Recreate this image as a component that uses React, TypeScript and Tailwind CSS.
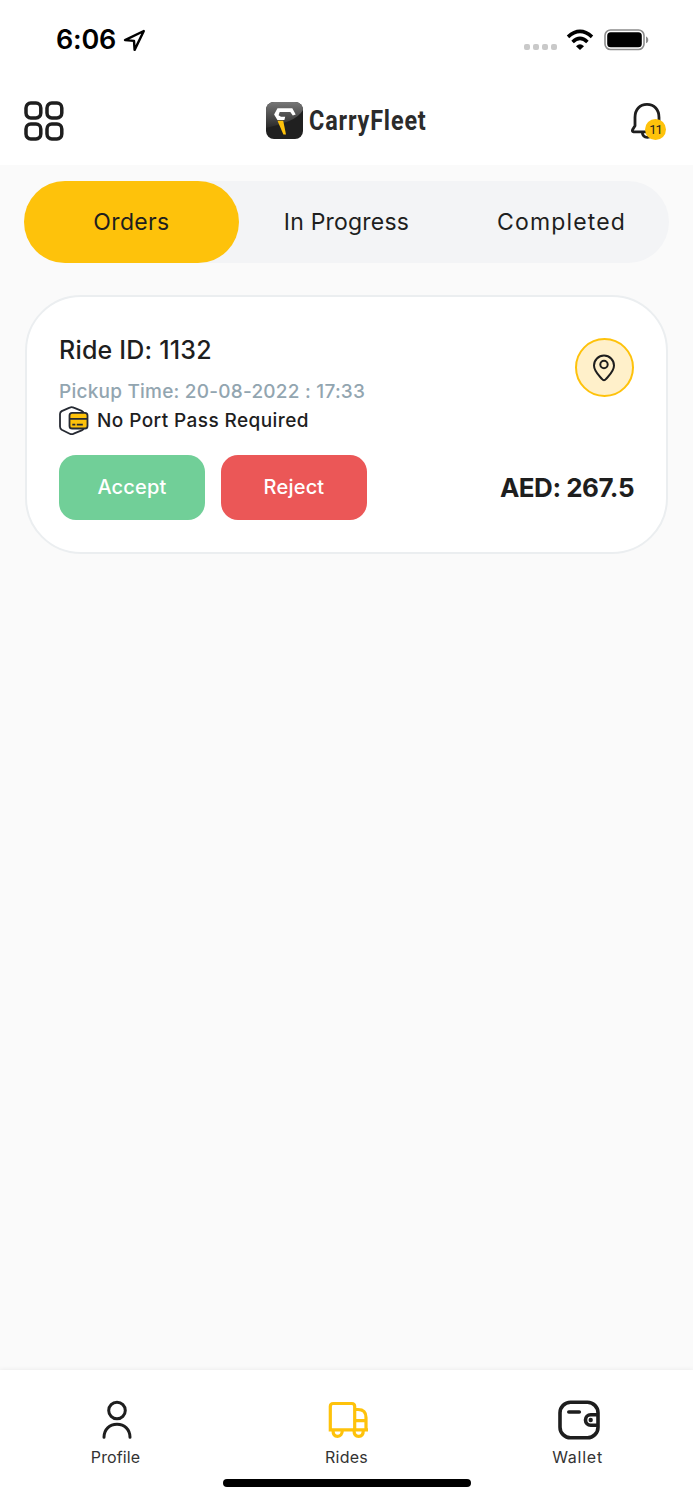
import { useState } from 'react';
import clsx from 'clsx';

const tabs = [
  { label: 'Orders', className: 'tracking-[0.35px]' },
  { label: 'In Progress', className: 'tracking-[0.2px]' },
  { label: 'Completed', className: 'tracking-[1.15px]' },
];

function StatusBar() {
  return (
    <div className="flex h-[78px] items-center justify-between pl-[56px] pr-[44px]">
      <div className="flex items-center gap-[7px] pt-[2px] text-black">
        <span className="text-[27px] font-semibold leading-8 tracking-[-0.2px]">6:06</span>
        <svg className="h-[23px] w-[23px]" viewBox="0 0 23 23" fill="none" stroke="currentColor" strokeWidth="2.4" strokeLinejoin="round">
          <path d="M20.8 2 2 11.1l9 .8.6 9z" />
        </svg>
      </div>
      <div className="flex items-center pt-[1px]">
        <div className="mt-[14px] flex gap-[3px]">
          {[0, 1, 2, 3].map((dot) => (
            <span key={dot} className="h-[6px] w-[6px] rounded-[2px] bg-[#c9c9c9]" />
          ))}
        </div>
        <svg className="ml-[9px] h-[22px] w-[28px]" viewBox="0 0 28 22" fill="none" stroke="#000">
          <path d="M2 7.800Q14-2.900 26 7.800" strokeWidth="3.600" />
          <path d="M6.600 13Q14 5.900 21.400 13" strokeWidth="3.600" />
          <path d="M10 17.200q4-3.700 8 0L14 21z" fill="#000" stroke="none" />
        </svg>
        <svg className="ml-[10px] h-[22px] w-[45px]" viewBox="0 0 45 22">
          <rect x="1" y="1" width="39" height="19.5" rx="5.5" fill="none" stroke="#8c8c8c" strokeWidth="1.6" />
          <rect x="3.2" y="3.2" width="34.6" height="15" rx="3.5" />
          <path d="M42 7.5c3 1.2 3 5.600 0 6.800z" fill="#8c8c8c" />
        </svg>
      </div>
    </div>
  );
}

function Logo() {
  return (
    <div className="flex items-center gap-[6px]">
      <svg className="h-[37px] w-[37px]" viewBox="0 0 37 37">
        <defs>
          <linearGradient id="gloss" x1="0" y1="0" x2="0" y2="1">
            <stop offset="0" stopColor="#777" />
            <stop offset="1" stopColor="#292929" />
          </linearGradient>
        </defs>
        <rect width="37" height="37" rx="8" fill="#202020" />
        <path d="M0 26V8a8 8 0 0 1 8-8h21a8 8 0 0 1 8 8Q33 15 23 19T0 26z" fill="url(#gloss)" />
        <path d="M11.500 6.200h14.800l3.400 6.300-2.900 1-2.500-3.500H13.700l-1.100 3.300 2.400 1.400h4.200l-.8 3.300h-7L8.100 12.600z" fill="#fff" />
        <path d="M11.500 18.800h5.700l2.800 13.700h-2.600z" fill="#fec20b" />
      </svg>
      <span className="w-[119px] origin-left scale-x-[0.865] whitespace-nowrap font-['Roboto',sans-serif] text-[27px] font-bold leading-9 tracking-[1px] text-[#2b2b2b]">
        CarryFleet
      </span>
    </div>
  );
}

function Header() {
  return (
    <header className="flex h-[87px] items-center justify-between pb-[2px] pl-6 pr-[27px]">
      <button aria-label="Menu">
        <svg className="h-10 w-10" viewBox="0 0 40 40" fill="none" stroke="#1e1e1e" strokeWidth="3.500">
          <rect x="2" y="2.100" width="14.800" height="14.800" rx="4.800" />
          <rect x="23" y="2.100" width="14.800" height="14.800" rx="4.800" />
          <rect x="2" y="23.100" width="14.800" height="14.800" rx="4.800" />
          <rect x="23" y="23.100" width="14.800" height="14.800" rx="4.800" />
        </svg>
      </button>
      <Logo />
      <button aria-label="Notifications" className="relative h-10 w-9">
        <svg className="h-10 w-9" viewBox="0 0 36 40" fill="none" stroke="#1e1e1e" strokeWidth="2.800" strokeLinejoin="round">
          <path d="M5 16.500C5 8.500 9.700 3.400 17 3.400S29 8.500 29 16.500v7l3 5.200v2.100H3.700q-2-.3-1-2.300L5 24.700z" />
          <path d="M12.200 31c.3 3.700 2.500 5.300 5.100 5.300s4.900-1.900 5.200-5.300" />
        </svg>
        <span className="absolute right-0 top-[18px] flex h-[21px] w-[21px] items-center justify-center rounded-full bg-[#fec20b] font-['Roboto',sans-serif] text-[13px] leading-none tracking-[-1px] text-[#1e1e1e]">
          11
        </span>
      </button>
    </header>
  );
}

function PortPassIcon() {
  return (
    <svg className="h-[30px] w-[30px]" viewBox="0 0 30 30" fill="none" stroke="#262a33" strokeWidth="1.800" strokeLinejoin="round">
      <path d="M10.700 1.600q2-1.100 4 0l8 3.200q2 .8 2 3v13.600q0 2-2 3l-8 3.300q-2 1-4 0l-8-3.900Q1 22.600 1 20.600V8.100q0-2 1.700-3z" />
      <rect x="10.500" y="6.900" width="18" height="15.600" rx="2.600" fill="#fec20b" />
      <path d="M10.500 12.900h18M13.300 18.600h3M17.800 18.600h6" />
    </svg>
  );
}

function RideCard() {
  return (
    <section className="mx-[25px] mt-8 flex h-[259px] justify-between rounded-[56px] border-2 border-[#ebeef0] bg-white px-8 pt-[35px] text-[#1e1e1e]">
      <div>
        <h2 className="text-[25px] font-medium leading-9 tracking-[0.2px]">Ride ID: 1132</h2>
        <p className="mt-[9px] text-[19px] font-medium leading-[30px] tracking-[0.23px] text-[#92a5b0]">
          Pickup Time: 20-08-2022 : 17:33
        </p>
        <div className="flex h-[28px] items-center gap-2">
          <PortPassIcon />
          <span className="whitespace-nowrap text-[19px] font-medium leading-7 tracking-[0.42px]">No Port Pass Required</span>
        </div>
        <div className="mt-[20px] flex gap-4 text-[20px] font-medium text-white">
          <button className="h-[65px] w-[146px] rounded-[17px] bg-[#71cf98] pb-[2px] tracking-[0.2px]">Accept</button>
          <button className="h-[65px] w-[146px] rounded-[17px] bg-[#eb5757] pb-[2px] tracking-[0.2px]">Reject</button>
        </div>
      </div>
      <div className="flex flex-col items-end">
        <button
          aria-label="Location"
          className="mt-[6px] flex h-[59px] w-[59px] items-center justify-center rounded-full border-2 border-[#fec20b] bg-[#fff0ca] pr-[2px]"
        >
          <svg className="h-[28px] w-[24px]" viewBox="0 0 24 28" fill="none" stroke="#1e1e1e" strokeWidth="2" strokeLinejoin="round">
            <path d="M12 26.200Q10.900 26.200 10 25C7 21.500 2 17.500 2 11.600a10 10 0 0 1 20 0C22 17.500 17 21.500 14 25q-.9 1.200-2 1.200z" />
            <circle cx="12" cy="10.500" r="3.700" />
          </svg>
        </button>
        <p className="mt-[73px] whitespace-nowrap text-[26px] font-bold leading-9 tracking-[-0.5px]">AED: 267.5</p>
      </div>
    </section>
  );
}

function ProfileIcon() {
  return (
    <svg className="h-10 w-10" viewBox="0 0 40 40" fill="none" stroke="#1e1e1e" strokeWidth="3" strokeLinecap="round">
      <circle cx="20" cy="10.500" r="8.300" />
      <path d="M7 37.300c0-8 5.500-13 13-13s13 5 13 13" />
    </svg>
  );
}

function TruckIcon() {
  return (
    <svg className="h-10 w-10" viewBox="0 0 40 40" fill="none" stroke="#fec20b" strokeWidth="3.200">
      <path d="M2.300 30.500V6.500q0-3 3-3h18.400q3 0 3 3v24M.700 29.800h39.300M26.700 9.500H30q8 0 8 8v12.300M26.700 20.600H38" />
      <path d="M5 30.200c0 4 2 6.100 4.600 6.100s4.700-2.100 4.700-6.100M26 30.200c0 4 2 6.100 4.700 6.100s4.600-2.100 4.600-6.100" />
    </svg>
  );
}

function WalletIcon() {
  return (
    <svg className="h-10 w-[42px]" viewBox="0 0 42 40" fill="none" stroke="#1e1e1e" strokeWidth="3.600" strokeLinecap="round">
      <rect x="2" y="2.300" width="38" height="35.400" rx="10.500" />
      <path d="M10.800 12h10.500" />
      <path d="M39 14.800h-6.300a5.200 5.200 0 0 0 0 10.400H39" />
      <circle cx="32.700" cy="20" r="2.200" fill="#1e1e1e" stroke="none" />
    </svg>
  );
}

const navItems = [
  { label: 'Profile', icon: <ProfileIcon />, className: 'tracking-[0.1px]' },
  { label: 'Rides', icon: <TruckIcon />, className: 'tracking-[0.3px]' },
  { label: 'Wallet', icon: <WalletIcon />, className: 'tracking-[0.75px]' },
];

export default function App() {
  const [activeTab, setActiveTab] = useState('Orders');

  return (
    <div className="flex h-[1500px] w-[693px] flex-col bg-[#fafafa] font-['Inter',sans-serif]">
      <div className="bg-white">
        <StatusBar />
        <Header />
      </div>

      <main className="flex-1 pt-4">
        <div className="mx-6 flex h-[82px] rounded-full bg-[#f3f4f6]">
          {tabs.map((tab) => (
            <button
              key={tab.label}
              onClick={() => setActiveTab(tab.label)}
              className={clsx(
                'flex-1 rounded-full text-[23px] text-[#1e1e1e]',
                tab.className,
                activeTab === tab.label && 'bg-[#fec20b]'
              )}
            >
              {tab.label}
            </button>
          ))}
        </div>
        <RideCard />
      </main>

      <footer className="flex h-[130px] flex-col items-center bg-white shadow-[0_0_5px_rgba(0,0,0,0.08)]">
        <nav className="flex h-[109px] w-full pt-[30px]">
          {navItems.map((item) => (
            <button key={item.label} className="flex flex-1 flex-col items-center justify-start text-[#333]">
              <span className="ml-[3px]">{item.icon}</span>
              <span className={clsx('mt-[5px] text-[16px] leading-6', item.className)}>{item.label}</span>
            </button>
          ))}
        </nav>
        <div className="h-2 w-[248px] rounded-full bg-black" />
      </footer>
    </div>
  );
}
